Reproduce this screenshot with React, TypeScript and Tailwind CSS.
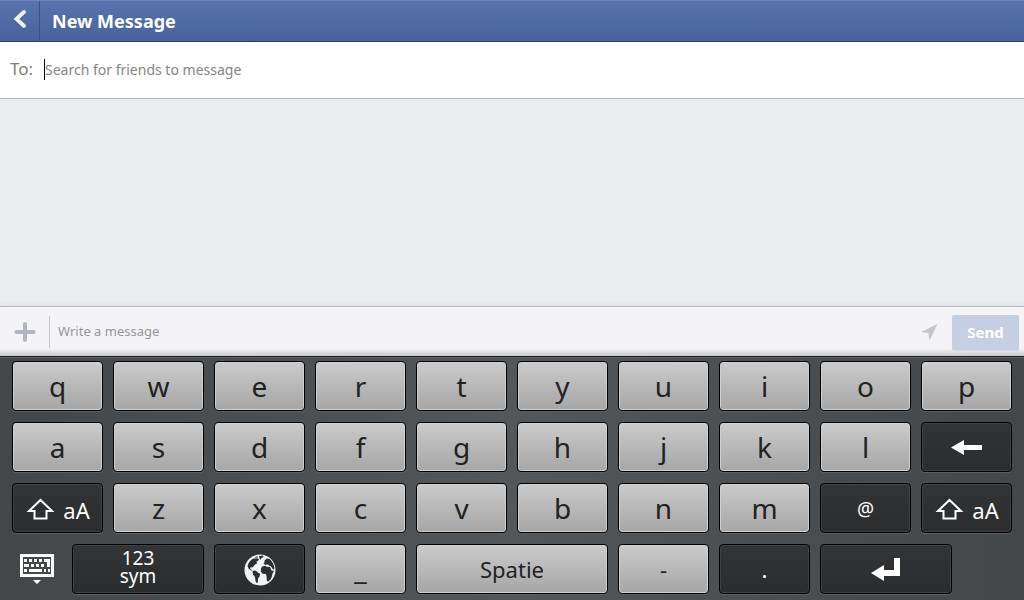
import type { ReactNode } from 'react';

const body = "font-['Noto_Sans','Open_Sans',sans-serif]";

const LIGHT =
  'border-black bg-linear-to-b from-[#cbcbcb] to-[#a6a6a6] text-[#222] shadow-[inset_0_0_0_1px_#d0d0d0,0_1px_0_#5c6062]';
const DARK =
  'border-black bg-linear-to-b from-[#323436] to-[#2a2c2e] text-white shadow-[inset_0_0_0_1px_#3f4143,0_1px_0_#5c5f61]';

type KeyProps = { children: ReactNode; label?: string; dark?: boolean; className?: string };

function Key({ children, label, dark = false, className = 'text-[28px]' }: KeyProps) {
  return (
    <button
      type="button"
      aria-label={label}
      className={`flex h-[50px] min-w-0 items-center justify-center rounded-[4px] border leading-none ${dark ? DARK : LIGHT} ${className}`}
    >
      {children}
    </button>
  );
}

function ShiftKey() {
  return (
    <Key dark label="Shift" className="gap-2 text-[22px]">
      <svg width="30" height="24" viewBox="0 0 30 24" fill="none" stroke="white" strokeWidth="2" aria-hidden="true">
        <path d="M15.500 4 27 15h-5.500v7.500h-12V15H4z" />
      </svg>
      <span className="pt-1">aA</span>
    </Key>
  );
}

function Globe() {
  return (
    <svg width="34" height="34" viewBox="0 0 34 34" aria-hidden="true">
      <circle cx="17" cy="18" r="15.500" fill="#f1f2f6" />
      <g fill="#2c2e30" transform="translate(0 1)">
        <path d="M4.500 13C5.500 9.500 7.500 7 10 5.800L14 5.200 16 6 15 8 13.500 8.500 14 10.500 12 11.500 10.500 13.500 9 14.500 7.500 14.300 7.200 16 9.500 17.500 8 17.500 5.500 15.500z" />
        <path d="M9.500 18 12 17.500 14 18.500 15 19.800 17.300 20.800 16.500 23.500 15 25.500 14.800 29.500 13.500 30 12.500 28 12 24 10 21.500z" />
        <path d="M19.200 13.500 22 12.800 23.500 13.800 27 14 28.500 17.500 31 18 29.500 20.500 28.800 24 27.500 26.500 25 28.800 23.800 27.500 23.500 23 22.800 21 19.500 20.800 17.800 18.500 18 15.500z" />
        <path d="M20.500 11 21.500 9 21.500 7.500 24 5.500 26.500 6C29 8 31 11.500 31.500 15L30.500 17 28 13.500 26.500 12.800 25 11.500 22.500 11.800z" />
        <path d="M12 4 14.500 3.200 15 4.200 12.500 4.800zM16 3 20 2.600 20.500 4 18 5.500 17.200 7 16.500 5z" />
      </g>
    </svg>
  );
}

export default function App() {
  return (
    <div className={`flex min-h-screen flex-col bg-[#ecedf1] ${body}`}>
      <header className="flex h-[42px] items-stretch border-t border-b border-t-[#7288b9] border-b-[#2f3f60] bg-linear-to-b from-[#5873ae] to-[#47639e]">
        <button type="button" aria-label="Back" className="flex w-10 items-center justify-center border-r border-[#3a5289] pb-1">
          <svg width="16" height="24" viewBox="0 0 16 24" fill="none" strokeLinecap="round" aria-hidden="true">
            <path d="M12 6 4.500 13l7.500 7" stroke="#3a5289" strokeWidth="4" />
            <path d="M12 5 4.500 12l7.500 7" stroke="#edf0f7" strokeWidth="4" />
          </svg>
        </button>
        <h1 className="flex items-center pl-3 text-lg font-bold text-white">New Message</h1>
      </header>

      <div className="flex h-[57px] items-center border-b border-[#b4b5b9] bg-white pb-0.5 pl-[10px]">
        <label htmlFor="to" className="w-[34px] text-[17px] text-[#808080]">To:</label>
        <span className="h-[21px] w-px bg-black" />
        <input id="to" type="text" placeholder="Search for friends to message" className="min-w-0 flex-1 bg-transparent text-[14px] outline-none placeholder:text-[#858585]" />
      </div>

      <main className="flex-1" />

      <form className="flex h-[50px] items-center border-t border-[#b8b9bd] bg-linear-to-b from-[#f4f4f7] from-85% to-[#c8c8ca] pr-[5px] shadow-[0_-1px_6px_#d9dbe0]">
        <button type="button" aria-label="Add attachment" className="flex w-[49px] items-center justify-center">
          <svg width="22" height="22" viewBox="0 0 22 22" stroke="#b3b5bd" strokeWidth="4" strokeLinecap="round" aria-hidden="true">
            <path d="M11 3v16M2.500 11h17" />
          </svg>
        </button>
        <span className="h-8 w-px bg-[#c5c6ca]" />
        <input type="text" aria-label="Message" placeholder="Write a message" className="min-w-0 flex-1 bg-transparent pl-2 text-[13px] outline-none placeholder:text-[#969696]" />
        <button type="button" aria-label="Share location" className="mr-[14px]">
          <svg width="17" height="17" viewBox="0 0 17 17" fill="#c5c6cc" aria-hidden="true">
            <path d="M16.500 1 8.500 17.500 7.500 10 0 9z" />
          </svg>
        </button>
        <button type="submit" className="mb-[6px] h-[35px] w-[67px] self-end rounded-[2px] bg-[#c5cee2] text-[15px] font-bold text-white shadow-[0_1px_1px_#d5d9e4]">Send</button>
      </form>

      <section aria-label="Keyboard" className="flex flex-col gap-[11px] border-t border-[#1c1e20] bg-linear-to-r from-[#43474a] via-[#53575a] to-[#43474a] px-3 pt-1 pb-[6px] shadow-[inset_0_1px_0_#5f6366]">
        <div className="grid grid-cols-10 gap-[10px]">
          {[...'qwertyuiop'].map((c) => <Key key={c}>{c}</Key>)}
        </div>
        <div className="grid grid-cols-10 gap-[10px]">
          {[...'asdfghjkl'].map((c) => <Key key={c}>{c}</Key>)}
          <Key dark label="Backspace">
            <svg width="32" height="16" viewBox="0 0 32 16" fill="white" aria-hidden="true">
              <path d="M0 8.500 13 1v5h18v5H13v5z" />
            </svg>
          </Key>
        </div>
        <div className="grid grid-cols-10 gap-[10px]">
          <ShiftKey />
          {[...'zxcvbnm'].map((c) => <Key key={c}>{c}</Key>)}
          <Key dark className="pt-0.5 text-[19px]">@</Key>
          <ShiftKey />
        </div>
        <div className="grid grid-cols-[50fr_132fr_91fr_91fr_192fr_91fr_91fr_132fr_50fr] gap-[10px]">
          <button type="button" aria-label="Hide keyboard" className="flex items-center justify-center">
            <svg width="34" height="30" viewBox="0 0 34 30" aria-hidden="true">
              <path d="M0 0h34v23H0zM3 3v17h28V3z" fill="white" fillRule="evenodd" />
              <path d="M4 5h3v3H4zM9 5h3v3H9zM14 5h3v3h-3zM19 5h3v3h-3zM24 5h6v8h-3V8h-3zM4 10h5v3H4zM11 10h3v3h-3zM16 10h3v3h-3zM21 10h3v3h-3zM4 15h3v3H4zM9 15h13v3H9zM24 15h2v3h-2zM28 15h2v3h-2zM13 26h8l-4 4z" fill="white" />
            </svg>
          </button>
          <Key dark className="pb-1 text-[19px]">
            <span className="block whitespace-pre-line text-center leading-[18px]">{'123\nsym'}</span>
          </Key>
          <Key dark label="Language"><Globe /></Key>
          <Key>_</Key>
          <Key className="text-[22px]">Spatie</Key>
          <Key className="text-[22px]">-</Key>
          <Key dark className="text-[22px]">.</Key>
          <Key dark label="Enter">
            <svg width="30" height="24" viewBox="0 0 30 24" fill="white" aria-hidden="true">
              <path d="M0 16 13 8v5h10V1h6v18H13v5z" />
            </svg>
          </Key>
        </div>
      </section>
    </div>
  );
}
